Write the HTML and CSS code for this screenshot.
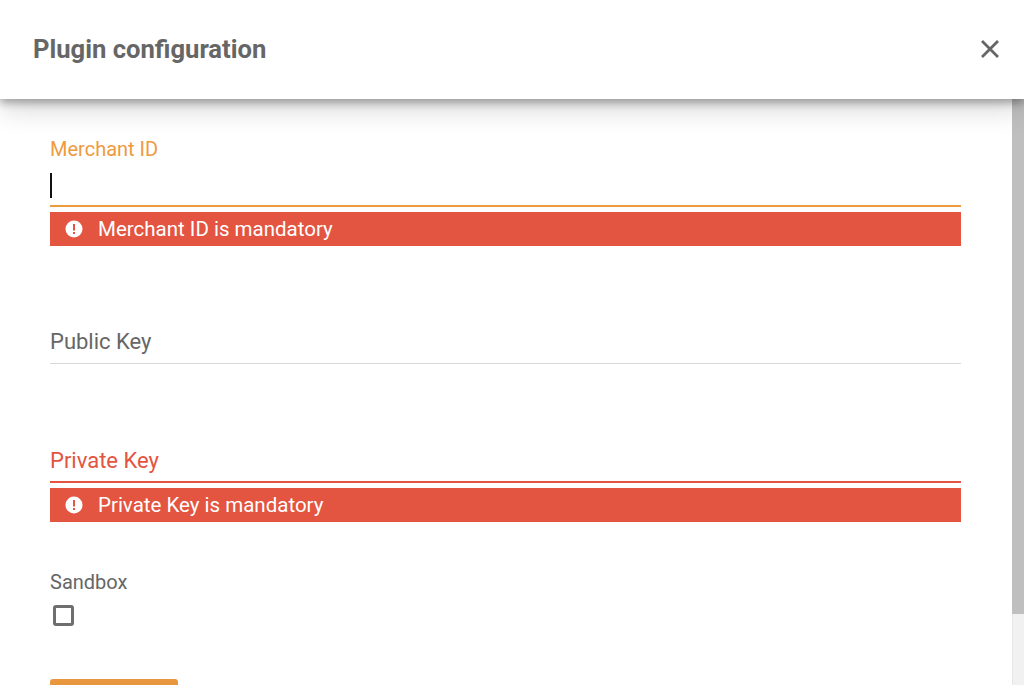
FILE: index.html
```html
<!DOCTYPE html>
<html>
<head>
    <title>Plugin configuration</title>
    <link rel="stylesheet" href="styles.css">
</head>
<body>
    <div class="modal">
        <div class="modal-header">
            <h1>Plugin configuration</h1>
            <svg class="close-icon" viewBox="0 0 20 20" width="20" height="20">
                <path d="M2 2L18 18M18 2L2 18" fill="none" stroke="#666" stroke-width="2.8"/>
            </svg>
        </div>
        <div class="modal-main">
            <div class="modal-body">
                <div class="field focused">
                    <label>Merchant ID</label>
                    <div class="input"><span class="caret"></span></div>
                </div>
                <div class="error">
                    <svg viewBox="0 0 18 18" width="18" height="18">
                        <circle cx="9" cy="9" r="8.5" fill="#fff"/>
                        <rect x="8" y="4" width="2" height="6.5" fill="#e35441"/>
                        <rect x="8" y="12" width="2" height="2" fill="#e35441"/>
                    </svg>
                    <span>Merchant ID is mandatory</span>
                </div>

                <div class="field empty">
                    <label>Public Key</label>
                    <div class="input"></div>
                </div>

                <div class="field empty invalid">
                    <label>Private Key</label>
                    <div class="input"></div>
                </div>
                <div class="error">
                    <svg viewBox="0 0 18 18" width="18" height="18">
                        <circle cx="9" cy="9" r="8.5" fill="#fff"/>
                        <rect x="8" y="4" width="2" height="6.5" fill="#e35441"/>
                        <rect x="8" y="12" width="2" height="2" fill="#e35441"/>
                    </svg>
                    <span>Private Key is mandatory</span>
                </div>

                <div class="checkbox-field">
                    <label>Sandbox</label>
                    <span class="checkbox"></span>
                </div>

                <button class="save-button"></button>
            </div>
            <div class="scrollbar">
                <div class="scrollbar-thumb"></div>
            </div>
        </div>
    </div>
</body>
</html>
```

FILE: styles.css
```css
html, body {
    margin: 0;
    height: 100%;
    overflow: hidden;
    background-color: #fff;
    font-family: Roboto, sans-serif;
    color: #666;
}
.modal {
    display: flex;
    flex-direction: column;
    height: 685px;
}
.modal-header {
    position: relative;
    z-index: 2;
    flex: none;
    display: flex;
    align-items: center;
    justify-content: space-between;
    box-sizing: border-box;
    height: 99px;
    padding: 0 24px 2px 33px;
    background-color: #fff;
    box-shadow: 0 4px 8px rgba(0, 0, 0, 0.3), 0 10px 26px rgba(0, 0, 0, 0.16);
}
h1 {
    margin: 0;
    font-size: 25.6px;
    font-weight: 700;
    color: #666;
}
.close-icon {
    display: block;
}
.modal-main {
    flex: 1;
    display: flex;
    min-height: 0;
}
.modal-body {
    flex: 1;
    overflow: hidden;
    padding: 38px 51px 0 50px;
}
.scrollbar {
    flex: none;
    width: 12px;
    background-color: #f1f1f1;
    border-left: 1px solid #e6e6e6;
    box-sizing: border-box;
}
.scrollbar-thumb {
    height: 515px;
    margin-left: -1px;
    background-color: #bfbfbf;
}
.field {
    height: 70px;
    box-sizing: border-box;
    display: flex;
    flex-direction: column;
    border-bottom: 1px solid #d9d9d9;
    font-size: 20px;
    line-height: 24px;
    margin-top: 48px;
}
.field:first-child {
    margin-top: 0;
}
.field label {
    display: block;
}
.field.empty label {
    margin-top: 36px;
    font-size: 22px;
}
.field.focused {
    border-bottom: 2px solid #ee9a3e;
}
.field.focused label {
    color: #ee9a3e;
}
.field.invalid {
    margin-top: 49px;
    border-bottom: 2px solid #e35441;
}
.field.invalid label {
    color: #e35441;
}
.input {
    flex: 1;
}
.caret {
    display: block;
    width: 1.5px;
    height: 25px;
    margin-top: 12px;
    background-color: #111;
}
.error {
    display: flex;
    align-items: center;
    gap: 15px;
    height: 34px;
    margin-top: 5px;
    padding-left: 15px;
    background-color: #e35441;
    color: #fff;
    font-size: 20.5px;
}
.checkbox-field {
    margin-top: 48px;
}
.checkbox-field label {
    display: block;
    font-size: 20px;
    line-height: 24px;
}
.checkbox {
    display: block;
    width: 15px;
    height: 15px;
    margin: 11px 0 0 3px;
    border: 3px solid #6e6e6e;
    border-radius: 3px;
}
.save-button {
    display: block;
    width: 128px;
    height: 40px;
    margin-top: 53px;
    border: none;
    border-radius: 3px;
    background-color: #e9973f;
}
```
